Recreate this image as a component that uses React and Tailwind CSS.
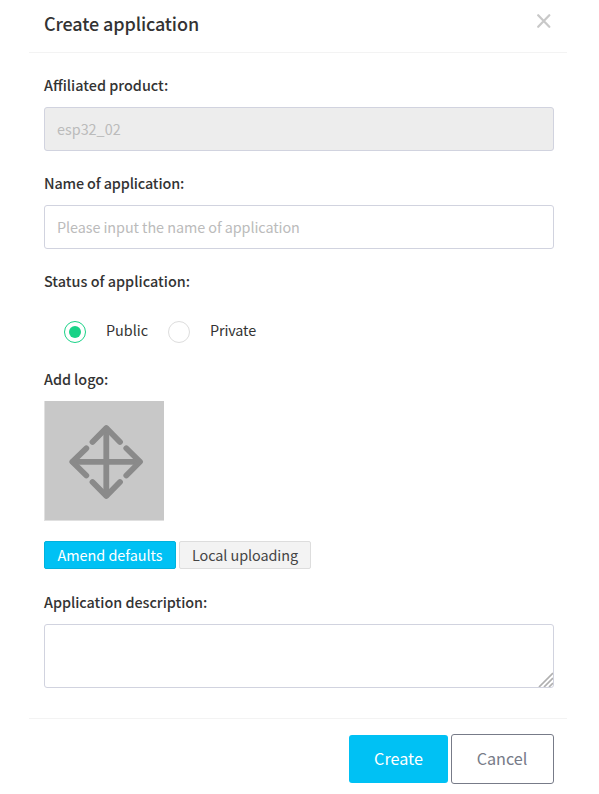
import React from "react";

function Label({ children, className = "" }) {
  return <div className={`h-6 text-[14.4px] leading-6 font-medium whitespace-nowrap ${className}`}>{children}</div>;
}

function MoveIcon() {
  return (
    <svg className="h-full w-full" viewBox="1 0 119 119" fill="none" stroke="#8a8a8a" strokeWidth="5.8" strokeLinecap="round" strokeLinejoin="round">
      <path d="M62.300 28V94M29 60.800H95" />
      <path d="M48.500 41L62.300 27L76 41" />
      <path d="M48.500 81L62.300 95L76 81" />
      <path d="M42.300 47.300L28.300 60.800L42.300 74.500" />
      <path d="M82.300 47.300L96 60.800L82.300 74.500" />
    </svg>
  );
}

export default function App() {
  return (
    <div className="h-[794px] w-[599px] overflow-hidden bg-white pl-[29px] font-['Noto_Sans_CJK_SC','Noto_Sans',sans-serif] text-[#333333]">
      <div className="w-[538px]">
        <header className="flex h-[53px] justify-between border-b border-[#f3f3f3] pr-[13px] pl-[15px]">
          <h1 className="mt-[8px] h-[30px] text-[18px] leading-[30px] font-medium tracking-[-0.12px] whitespace-nowrap">Create application</h1>
          <button className="mt-[14px] mr-[3px] h-[14px] w-[14px]" aria-label="Close">
            <svg viewBox="0 0 14 14" className="block h-[14px] w-[14px]" stroke="#c8c8c8" strokeWidth="2.200" strokeLinecap="round">
              <path d="M1.200 1.200L12.300 12.800M12.300 1.200L1.200 12.800" />
            </svg>
          </button>
        </header>
        <main className="flex h-[665px] flex-col pt-[20px] pr-[13px] pl-[15px]">
          <Label>Affiliated product:</Label>
          <div className="mt-[10px] flex h-11 items-center rounded-[3px] border border-[#d1d3df] bg-[#ededed] px-3 text-[14.4px] text-[#bbbbbb]">esp32_02</div>
          <div className="mt-[20px]"><Label className="tracking-[-0.14px]">Name of application:</Label></div>
          <div className="mt-[10px] flex h-11 items-center rounded-[3px] border border-[#d1d3df] px-3 text-[14.4px] tracking-[-0.07px] text-[#bbbbbb]">Please input the name of application</div>
          <div className="mt-[20px]"><Label className="tracking-[0.02px]">Status of application:</Label></div>
          <div className="mt-[26px] flex h-6 pl-5 text-[14.4px] leading-6">
            <span className="mt-[2px] flex h-[22px] w-[22px] items-center justify-center rounded-full border border-[#19d287]">
              <span className="h-3 w-3 rounded-full bg-[#19d287]" />
            </span>
            <span className="-mt-px ml-5 w-[62px]">Public</span>
            <span className="mt-[2px] h-[22px] w-[22px] rounded-full border border-[#dddddd]" />
            <span className="-mt-px ml-5 tracking-[-0.12px]">Private</span>
          </div>
          <div className="mt-[24px]"><Label className="tracking-[-0.05px]">Add logo:</Label></div>
          <div className="mt-[10px] h-[120px] w-[120px] border-b border-l border-[#e0e0e0] bg-[#c8c8c8]">
            <MoveIcon />
          </div>
          <div className="mt-5 flex gap-[3px] text-[14.4px] leading-[26px]">
            <button className="h-7 w-[132px] rounded-[2px] border border-[#00b2dd] bg-[#00c1f4] text-white">Amend defaults</button>
            <button className="h-7 w-[132px] rounded-[2px] border border-[#dddddd] bg-[#f3f3f3] tracking-[-0.08px] text-[#444444]">Local uploading</button>
          </div>
          <div className="mt-[21px]"><Label className="tracking-[-0.03px]">Application description:</Label></div>
          <div className="mt-[10px] flex h-16 items-end justify-end rounded-[3px] border border-[#d1d3df]">
            <svg className="h-[15px] w-[15px]" viewBox="0 0 15 15" stroke="#b0b0b0" strokeWidth="1.700">
              <path d="M1 15L15 1M6 15L15 6M11 15L15 11" />
            </svg>
          </div>
        </main>
        <footer className="flex justify-end gap-[3px] border-t border-[#f3f3f3] pt-[15px] pr-[13px] text-[16.2px]">
          <button className="mt-px h-12 w-[99px] rounded-[3px] bg-[#00c1f4] pb-[2px] text-white">Create</button>
          <button className="h-[50px] w-[103px] rounded-[3px] border border-[#777b88] pr-px pb-[2px] text-[#777b88]">Cancel</button>
        </footer>
      </div>
    </div>
  );
}
